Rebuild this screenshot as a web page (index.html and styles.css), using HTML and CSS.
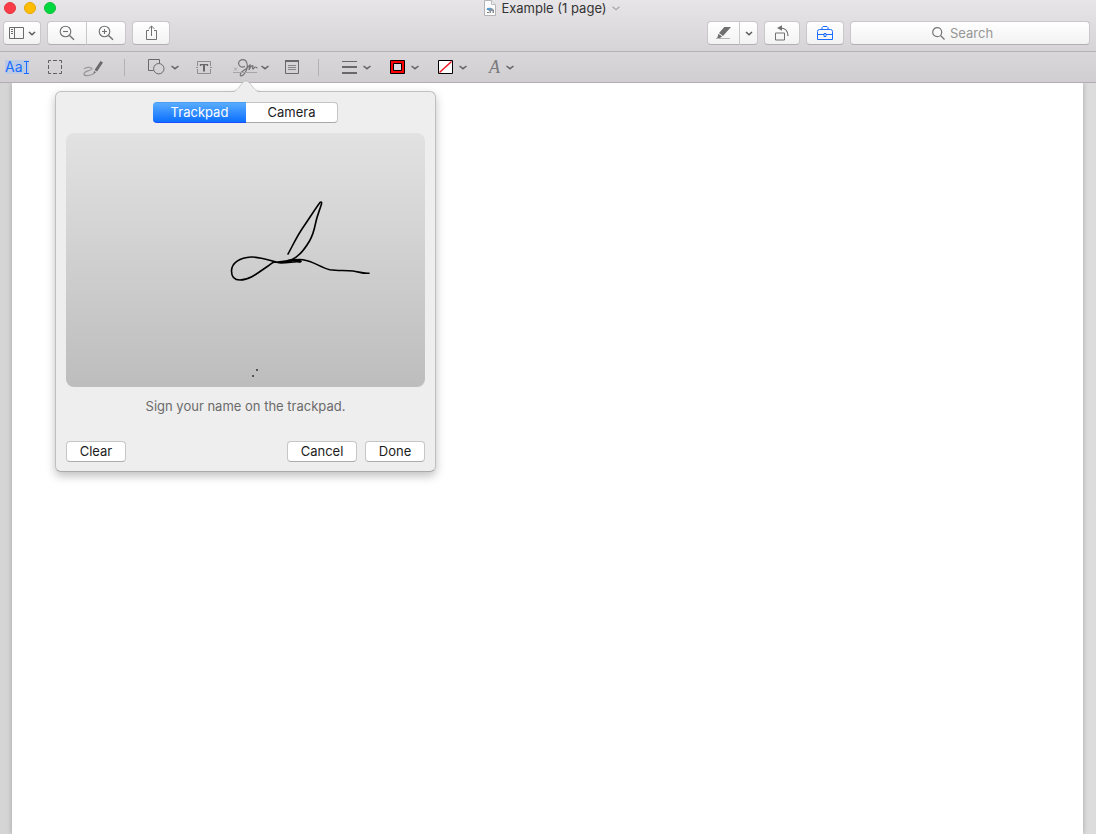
FILE: index.html
```
<!DOCTYPE html>
<html lang="en">
<head>
<meta charset="utf-8">
<title>Example (1 page)</title>
<link rel="stylesheet" href="styles.css">
</head>
<body>
<div class="window">
  <header class="chrome">
    <div class="titlebar">
      <div class="lights">
        <button class="light close" aria-label="Close"></button>
        <button class="light minimize" aria-label="Minimize"></button>
        <button class="light expand" aria-label="Full screen"></button>
      </div>
      <h1 class="title">
        <svg width="12" height="16" viewBox="0 0 12 16"><path d="M.5.5h7l4 4v11H.5z" fill="#fbfbfb" stroke="#b4b4b6"/><path d="M7.500.5v4h4" fill="#ececee" stroke="#bdbdbf"/><path d="M2.500 9.500c1-2 4-2.500 6-1l1.500 1.500v3H8.500V11H7v2H5.500v-2z" fill="#8a919b"/><path d="M3 8h4v2H3z" fill="#5b9bd0"/><path d="M3 12h2v1H3z" fill="#7a7c80"/></svg>
        <span>Example (1 page)</span>
        <svg width="8" height="5" viewBox="0 0 8 5"><path d="M.5.7 4 3.700 7.500.7" fill="none" stroke="#aaa8aa" stroke-width="1.300"/></svg>
      </h1>
    </div>
    <div class="toolbar">
      <button class="tool" aria-label="View">
        <svg width="15" height="12" viewBox="0 0 15 12" fill="none" stroke="#6b6b6b"><path d="M.5.5h14v11H.5zM5.500.5v11M2 2.500h2M2 4.500h2M2 6.500h2"/></svg>
        <svg width="8" height="5" viewBox="0 0 8 5"><path class="chev" d="M1 1l3 2.700L7 1"/></svg>
      </button>
      <div class="pair">
        <button class="tool" aria-label="Zoom out"><svg width="16" height="16" viewBox="0 0 16 16" fill="none" stroke="#707070" stroke-width="1.100"><circle cx="6.500" cy="6.500" r="5.300"/><path d="M4 6.500h5"/><path d="M10.500 10.500l4.500 4.200" stroke-width="1.500"/></svg></button>
        <button class="tool" aria-label="Zoom in"><svg width="16" height="16" viewBox="0 0 16 16" fill="none" stroke="#707070" stroke-width="1.100"><circle cx="6.500" cy="6.500" r="5.300"/><path d="M4 6.500h5M6.500 4v5"/><path d="M10.500 10.500l4.500 4.200" stroke-width="1.500"/></svg></button>
      </div>
      <button class="tool" aria-label="Share"><svg width="13" height="16" viewBox="0 0 13 16" fill="none" stroke="#707070"><path d="M4 5.500H1.500v9h10v-9H9M6.500 11V1M3.700 3.800 6.500 1l2.800 2.800"/></svg></button>
      <div class="pair highlight">
        <button class="tool pen" aria-label="Highlight"><svg width="17" height="14" viewBox="0 0 17 14"><path d="M9.300 1H16L8 10l-4-3zM3.500 7.700l3.600 2.800L5 12l-3 .5z" fill="#707070"/><path d="M1 12.500h14" stroke="#b4b4b4"/></svg></button>
        <button class="tool drop" aria-label="Highlight options"><svg width="8" height="5" viewBox="0 0 8 5"><path class="chev" d="M1 1l3 2.700L7 1"/></svg></button>
      </div>
      <button class="tool rotate" aria-label="Rotate"><svg width="16" height="16" viewBox="0 0 16 16" fill="none" stroke="#707070"><path d="M1.500 8h9v7h-9z"/><path d="M6 3c5 0 8 3 8 8" stroke-width="1.200"/><path d="M3 3l5-2.800v5.600z" fill="#707070" stroke="none"/></svg></button>
      <button class="tool" aria-label="Markup"><svg width="18" height="14" viewBox="0 0 18 14" fill="none" stroke="#1a6dff"><path d="M1.500 5.500q0-2 2-2h11q2 0 2 2v8h-15zM1.500 8.500H8M10 8.500h6.500M8 7.500h2v3H8zM6 3.500v-2l1-1h4l1 1v2"/></svg></button>
      <label class="search">
        <svg width="13" height="13" viewBox="0 0 13 13" fill="none" stroke="#747474" stroke-width="1.200"><circle cx="5.200" cy="5.200" r="4.500"/><path d="M8.500 8.500l4 4"/></svg>
        <input type="text" placeholder="Search" aria-label="Search">
      </label>
    </div>
  </header>

  <nav class="markup" aria-label="Markup tools">
    <button class="mark text-select" aria-label="Text selection"><span>Aa</span><svg width="5" height="13" viewBox="0 0 5 13" fill="none" stroke="#1a6dff"><path d="M0 .5h5M2.500 1v11M0 12.500h5"/></svg></button>
    <button class="mark" aria-label="Rectangular selection"><svg width="14" height="14" viewBox="0 0 14 14" fill="none" stroke="#5f5f61"><path d="M.5 3V.5H3M5 .5h4M11 .5h2.500V3M13.500 5v4M13.500 11v2.500H11M9 13.500H5M3 13.500H.5V11M.5 9V5"/></svg></button>
    <button class="mark" aria-label="Sketch"><svg class="low" width="21" height="17" viewBox="0 0 21 17"><path d="M1 9c1-1.800 7-2.500 8-.5C9.500 11 1 10.500 1 14c.5 2.500 6 2 10-.5" fill="none" stroke="#9a999b" stroke-width="1.300"/><path d="M17.500 1l2.500 1.500-6 9-2.500-1.500zM11 11l2 1.200L10.500 14z" fill="#69696b"/></svg></button>
    <span class="divider"></span>
    <button class="mark" aria-label="Shapes"><svg width="18" height="16" viewBox="0 0 18 16" fill="none" stroke="#69696b"><path d="M6.500 11.500H1.500v-11h11V4"/><circle cx="11.800" cy="9.700" r="5.200"/></svg><svg width="8" height="5" viewBox="0 0 8 5"><path class="chev" d="M.5 1 4 3.700 7.500 1"/></svg></button>
    <button class="mark" aria-label="Text"><svg width="16" height="15" viewBox="0 0 16 15" fill="none" stroke="#8e8d8f"><path d="M1.500 6V1.500h13V6M1.500 9v4.500h13V9M0 7.500h2M14 7.500h2"/><path d="M4.500 6V4.700h7V6" stroke="#69696b" stroke-width="1.300"/><path d="M8 4.500v7" stroke="#69696b" stroke-width="2"/></svg></button>
    <button class="mark sign" aria-label="Sign" aria-expanded="true"><svg width="25" height="20" viewBox="0 0 25 20" fill="none" stroke="#737375" stroke-width="1.200"><path d="M12 9.500C8.500 11 5.500 9 5.500 6 6 3 10 1.500 12.500 3.500c2.500 2.500 2.500 7.500 0 11.500-1.500 3-4 4.500-5 3.500C6 16 10 14 13 12l4-4c.5 2-1 3-1 5 1-3 3-5 4-4 0 1-1 3 0 3s1-2 2.500-2 0 1 2 1"/><path d="M0 15.500h24M1 10.500l3 3M4 10.500l-3 3" stroke="#a5a4a6" stroke-width="1"/></svg><svg width="8" height="5" viewBox="0 0 8 5"><path class="chev" d="M.5 1 4 3.700 7.500 1"/></svg></button>
    <button class="mark" aria-label="Note"><svg width="14" height="14" viewBox="0 0 14 14" fill="none" stroke="#69696b"><path d="M.5 1h13v12.500H.5z"/><path d="M0 1h14" stroke-width="2"/><path d="M3 5.500h8M3 7.500h8M3 9.500h8" stroke="#858486"/></svg></button>
    <span class="divider"></span>
    <button class="mark" aria-label="Shape style"><svg width="15" height="14" viewBox="0 0 15 14" fill="#69696b"><path d="M0 1h15v1H0zM0 6h15v2H0zM0 12h15v2H0z"/></svg><svg width="8" height="5" viewBox="0 0 8 5"><path class="chev" d="M.5 1 4 3.700 7.500 1"/></svg></button>
    <button class="mark" aria-label="Border colour"><svg width="15" height="14" viewBox="0 0 15 14"><path d="M.5.5h14v13H.5z" fill="red" stroke="#000"/><path d="M3.500 3.500h8v7h-8z" fill="#dad8da" stroke="#000"/></svg><svg width="8" height="5" viewBox="0 0 8 5"><path class="chev" d="M.5 1 4 3.700 7.500 1"/></svg></button>
    <button class="mark" aria-label="Fill colour"><svg width="15" height="14" viewBox="0 0 15 14"><path d="M.5.5h14v13H.5z" fill="#fff" stroke="#000"/><path d="M1.500 12.500 13.500 1.500" stroke="#f11420" stroke-width="1.500"/></svg><svg width="8" height="5" viewBox="0 0 8 5"><path class="chev" d="M.5 1 4 3.700 7.500 1"/></svg></button>
    <button class="mark text-style" aria-label="Text style"><span>A</span><svg width="8" height="5" viewBox="0 0 8 5"><path class="chev" d="M.5 1 4 3.700 7.500 1"/></svg></button>
  </nav>

  <main class="workspace">
    <div class="page"></div>
    <section class="popover" aria-label="Create signature">
      <svg class="arrow" width="30" height="13" viewBox="0 0 30 13"><path d="M0 12c5 0 6-2 9-6 3-4 4-5 6-5s3 1 6 5c3 4 4 6 9 6v1H0z" fill="#eee"/><path d="M0 11.500c5 0 6-2 9-5.500 3-4 4-5 6-5s3 1 6 5c3 3.500 4 5.500 9 5.500" fill="none" stroke="#bdbcbd" stroke-width=".8"/></svg>
      <div class="segments">
        <button class="segment active" aria-pressed="true">Trackpad</button>
        <button class="segment" aria-pressed="false">Camera</button>
      </div>
      <div class="pad">
        <svg width="359" height="254" viewBox="0 0 359 254" fill="none" stroke="#000" stroke-width="1.600" stroke-linecap="round" stroke-linejoin="round"><path d="M222 121C226 114 231 103 237 94.500S249 76 254 69.500q2-1.500 1.500 1.500C253 79 251 83 249.500 90.500S247 102 243.500 108 234 123.500 225 127"/><path d="M235 128.500c-8 0-14 1.700-22 1.300-9-2-18-6-28-5.800-11 .5-19.500 6-19.500 14 0 6 3.500 9 8.500 9 10 0 19-8 28-14 4-3 4.500-4.300 8-4 8 .7 17-3.500 27-2.200 11 1.700 17 7.500 27 10 8 1.200 15 .3 23 1.200 6 .8 10 2.800 16 2.200"/><path d="M222 128c5-1.500 8-.5 12 .5" stroke-width="2.500"/><path d="M186 242h2v2h-2zM190 236h2v2h-2z" fill="#555" stroke="none"/></svg>
      </div>
      <p class="hint">Sign your name on the trackpad.</p>
      <div class="actions">
        <button class="push clear">Clear</button>
        <button class="push cancel">Cancel</button>
        <button class="push">Done</button>
      </div>
    </section>
  </main>
</div>
</body>
</html>
```
FILE: styles.css
```
* { box-sizing: border-box; }
body {
  margin: 0;
  font: 13px/16px Inter, "Liberation Sans", sans-serif;
  color: #1d1d1d;
}
button, input { font: inherit; color: inherit; margin: 0; padding: 0; border: 0; background: none; }
svg { display: block; flex: none; }
.chev { fill: none; stroke: #59595b; stroke-width: 1.5; }
.window { display: flex; flex-direction: column; min-height: 100vh; }

.chrome {
  background: linear-gradient(#e7e5e7, #d6d4d6);
  border-bottom: 1px solid #b3b1b3;
  padding-bottom: 6px;
}
.titlebar {
  display: grid;
  grid-template-columns: 1fr auto 1fr;
  height: 21px;
  align-items: start;
}
.lights { display: flex; gap: 8px; padding: 2px 4px; }
.light { width: 12px; height: 12px; border-radius: 50%; }
.close { background: #fc3d49; border: 1px solid #e4343e; }
.minimize { background: #ffbd00; border: 1px solid #e6a400; }
.expand { background: #00d840; border: 1px solid #10bd38; }
.title {
  display: flex;
  align-items: center;
  gap: 5px;
  margin: 0;
  padding-left: 8px;
  font-size: 13px;
  font-weight: 400;
  color: #343434;
}

.toolbar { display: flex; gap: 6px; padding: 0 6px 0 3px; }
.tool, .search {
  display: flex;
  align-items: center;
  justify-content: center;
  height: 24px;
  background: linear-gradient(#fff, #f2f2f2);
  border: 1px solid #c9c7c9;
  border-bottom-color: #b1afb1;
  border-radius: 4px;
}
.tool { width: 38px; gap: 4px; }
.pair { display: flex; }
.pair .tool { width: 40px; }
.pair .tool:first-child { border-radius: 4px 0 0 4px; }
.pair .tool:last-child { width: 39px; border-left: 0; border-radius: 0 4px 4px 0; }
.highlight { margin-left: auto; }
.pair .pen { width: 33px; }
.pair .drop:last-child { width: 18px; }
.rotate { width: 36px; }
.search { width: 240px; gap: 5px; }
.search input { width: 58px; height: 20px; outline: 0; }
.search input::placeholder { color: #969696; opacity: 1; }

.markup {
  display: grid;
  grid-template-columns: 43px 35px 41px 23px 49px 37px 52px 33px 24px 48px 48px 51px auto;
  justify-content: start;
  align-items: center;
  height: 31px;
  padding-left: 5px;
  background: linear-gradient(#d9d7d9, #d0ced0);
  border-bottom: 1px solid #b0aeb0;
}
.mark { display: flex; align-items: center; justify-self: start; gap: 6px; height: 22px; }
.mark .chev { stroke: #666668; }
.mark .low { margin-top: 3px; }
.sign { gap: 3px; }
.text-select { gap: 1px; height: 14px; background: #bccbe3; color: #1a6dff; font-size: 14px; }
.text-style { font: italic 18px/22px "Liberation Serif", serif; color: #7a797b; }
.divider { width: 1px; height: 17px; background: #b3b1b3; }

.workspace {
  position: relative;
  flex: 1;
  display: flex;
  padding: 0 13px 0 12px;
  background: linear-gradient(90deg, #d5d5d5, #dcdcdc);
}
.page { flex: 1; background: #fff; box-shadow: 0 0 5px rgba(0, 0, 0, .25); clip-path: inset(0 -8px); }

.popover {
  position: absolute;
  top: 8px;
  left: 55px;
  width: 381px;
  padding: 10px 10px 9px;
  background: #eee;
  border: 1px solid #c0c0c0;
  border-bottom-color: #aaa;
  border-radius: 6px;
  box-shadow: 0 4px 10px rgba(0, 0, 0, .25);
}
.arrow { position: absolute; top: -12px; left: 175px; }
.segments { display: flex; justify-content: center; }
.segment, .push { height: 21px; padding-bottom: 2px; }
.segment {
  width: 92px;
  background: #fff;
  border: 1px solid #c4c4c4;
  border-bottom-color: #a9a9a9;
  border-left: 0;
  border-radius: 0 4px 4px 0;
}
.segment.active {
  width: 93px;
  color: #fff;
  background: linear-gradient(#58acff, #0c6fff);
  border: 0;
  border-top: 1px solid #4a9df5;
  border-bottom: 1px solid #1a4fff;
  border-radius: 4px 0 0 4px;
}
.pad {
  display: flex;
  justify-content: center;
  margin-top: 10px;
  background: linear-gradient(#e2e2e2, #bdbdbd);
  border-radius: 8px;
}
.hint { margin: 11px 0 27px; text-align: center; color: #6b6b6b; }
.actions { display: flex; gap: 8px; }
.push {
  width: 60px;
  background: #fff;
  border: 1px solid #c6c6c6;
  border-bottom-color: #adadad;
  border-radius: 4px;
}
.clear { margin-right: auto; }
.cancel { width: 70px; }
```
